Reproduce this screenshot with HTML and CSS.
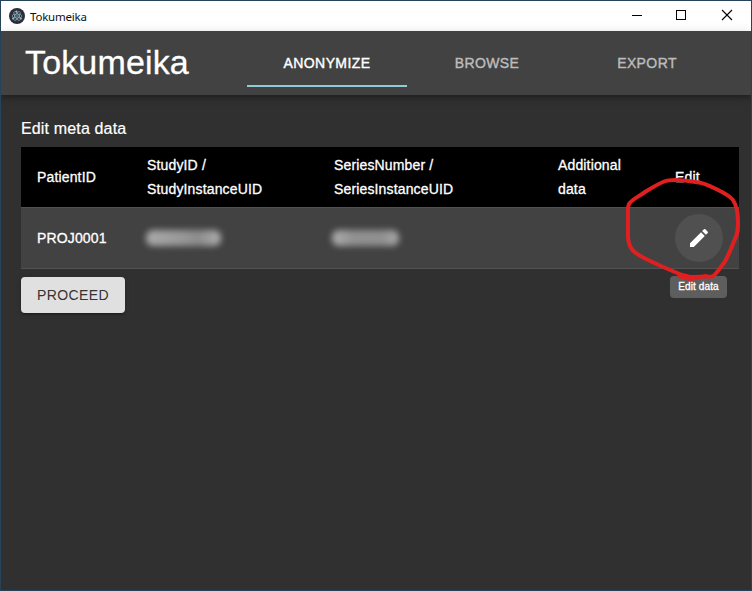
FILE: index.html
```html
<!DOCTYPE html>
<html lang="en">
<head>
<meta charset="utf-8">
<title>Tokumeika</title>
<link rel="stylesheet" href="styles.css">
</head>
<body>
<div class="window">
  <header class="titlebar">
    <svg class="logo" viewBox="0 0 16 16"><circle cx="8" cy="8" r="8" fill="#2b2e3a"/><g fill="none" stroke="#8fb0ba" stroke-width=".7"><ellipse cx="8" cy="8" rx="5" ry="2"/><ellipse cx="8" cy="8" rx="5" ry="2" transform="rotate(60 8 8)"/><ellipse cx="8" cy="8" rx="5" ry="2" transform="rotate(120 8 8)"/></g><g fill="#9fc4cf"><circle cx="8" cy="8" r=".7"/><circle cx="4" cy="10.500" r=".9"/><circle cx="12" cy="10.500" r=".9"/><circle cx="7.500" cy="3.300" r=".9"/></g></svg>
    <span class="caption">Tokumeika</span>
    <div class="controls">
      <svg viewBox="0 0 46 30"><path d="M17 14.5h10"/></svg>
      <svg viewBox="0 0 46 30"><path d="M16.500 9.500h9v9h-9z"/></svg>
      <svg viewBox="0 0 46 30"><path class="cross" d="M17 9l10 10M27 9l-10 10"/></svg>
    </div>
  </header>
  <nav class="appbar">
    <h1 class="brand">Tokumeika</h1>
    <div class="tabs">
      <a class="tab active">ANONYMIZE</a>
      <a class="tab">BROWSE</a>
      <a class="tab">EXPORT</a>
    </div>
  </nav>
  <main class="content">
    <h2 class="heading">Edit meta data</h2>
    <div class="table">
      <div class="row head">
        <div class="cell">PatientID</div>
        <div class="cell">StudyID /<br>StudyInstanceUID</div>
        <div class="cell">SeriesNumber /<br>SeriesInstanceUID</div>
        <div class="cell">Additional<br>data</div>
        <div class="cell">Edit</div>
      </div>
      <div class="row">
        <div class="cell">PROJ0001</div>
        <div class="cell"><span class="redacted study"></span></div>
        <div class="cell"><span class="redacted series"></span></div>
        <div class="cell"></div>
        <div class="cell">
          <button class="edit" aria-label="Edit data"><svg viewBox="0 0 24 24"><path d="M3 17.250V21h3.750L17.810 9.940l-3.750-3.750L3 17.250zM20.710 7.040a1 1 0 0 0 0-1.410l-2.340-2.340a1 1 0 0 0-1.410 0l-1.830 1.830 3.750 3.750 1.830-1.830z"/></svg></button>
          <span class="tooltip">Edit data</span>
        </div>
      </div>
    </div>
    <button class="proceed">PROCEED</button>
  </main>
  <svg class="annotation" viewBox="620 170 132 120"><path d="M675 180C671 180 668 180 664 181.500C656 185 650 189 645 192C638 197 631 200 629 204C627.500 207 628 210 628 214V236C628 243 630 248 634 251.500C638 255 642 257 646 259L662 266.500L682 275L690 277L712 276.500C716 275 719 269 724 263C729 255 732 246 735 239C738 233 738 229 738 222C738 212 737 206 733 200C729 195 722 192 715 188.500C708 185 703 183 699 182.500C690 181 682 180 675 180M679 276L690 279L706 276"/></svg>
</div>
</body>
</html>
```

FILE: styles.css
```css
* { box-sizing: border-box; }

body {
  margin: 0;
  font-family: "Liberation Sans", Arial, sans-serif;
  color: #fff;
}

.window {
  position: relative;
  height: 591px;
  display: flex;
  flex-direction: column;
  overflow: hidden;
  background: #303030;
  border: 1px solid #254459;
}

.titlebar {
  flex: none;
  height: 30px;
  display: flex;
  align-items: center;
  padding-left: 8px;
  background: #fff;
  color: #111;
}

.logo { width: 16px; height: 16px; }

.caption {
  margin-left: 5px;
  font: 11.5px "Noto Sans", sans-serif;
  letter-spacing: -.2px;
}

.controls { display: flex; margin-left: auto; }

.controls svg {
  width: 46px;
  height: 30px;
  fill: none;
  stroke: #000;
  shape-rendering: crispEdges;
}

.controls svg:first-child { margin-right: -1px; }
.controls svg:last-child { margin-left: -1px; }
.controls .cross { stroke-width: 1.1; shape-rendering: auto; }

.appbar {
  flex: none;
  height: 64px;
  display: flex;
  align-items: center;
  padding: 0 24px;
  background: #424242;
  box-shadow: 0 2px 4px -1px rgba(0,0,0,.2), 0 4px 5px rgba(0,0,0,.14), 0 1px 10px rgba(0,0,0,.12);
}

.brand {
  width: 222px;
  margin: 0;
  padding-bottom: 1px;
  font-size: 34px;
  font-weight: 400;
  line-height: 41px;
  letter-spacing: .15px;
  -webkit-text-stroke: .3px;
}

.tabs { display: flex; }

.tab {
  width: 160px;
  height: 48px;
  line-height: 48px;
  text-align: center;
  font-size: 14px;
  letter-spacing: .4px;
  color: #bcbcbc;
  -webkit-text-stroke: .4px;
}

.tab.active { color: #fff; border-bottom: 2px solid #90cad6; }

.content { padding: 22px 12px 0 20px; }

.heading {
  margin: 0 0 6px;
  font-size: 16px;
  font-weight: 400;
  line-height: 24px;
  letter-spacing: .15px;
  -webkit-text-stroke: .2px;
}

.table { font-size: 14px; letter-spacing: .15px; }

.row {
  display: grid;
  grid-template-columns: 110px 187px 224px 117px 80px;
  align-items: center;
  height: 61px;
  background: #424242;
  border-bottom: 1px solid #515151;
}

.head { background: #000; line-height: 24px; }

.cell { position: relative; padding-left: 16px; -webkit-text-stroke: .3px; }

.redacted {
  display: block;
  height: 16px;
  border-radius: 7px;
  filter: blur(3px);
}

.study {
  width: 75px;
  margin-left: -1px;
  background: linear-gradient(90deg, #aaa, #989898 50%, #8c8c8c 70%, #b0b0b0);
}

.series {
  width: 67px;
  margin-left: -2px;
  background: linear-gradient(90deg, #b0b0b0, #929292 30%, #909090 75%, #aaa);
}

.edit {
  display: block;
  width: 48px;
  height: 48px;
  padding: 12px;
  border: 0;
  border-radius: 50%;
  background: #505050;
}

.edit svg { display: block; width: 24px; height: 24px; fill: #fff; }

.tooltip {
  position: absolute;
  top: 62px;
  left: 11px;
  width: 57px;
  height: 22px;
  border-radius: 4px;
  background: #5e5e5e;
  text-align: center;
  font-size: 10px;
  line-height: 22px;
  letter-spacing: .1px;
  white-space: nowrap;
}

.proceed {
  display: block;
  width: 104px;
  height: 36px;
  margin-top: 8px;
  padding: 0;
  border: 0;
  border-radius: 4px;
  background: #e0e0e0;
  color: #333;
  font: 14px "Liberation Sans", Arial, sans-serif;
  letter-spacing: .4px;
  box-shadow: 0 3px 1px -2px rgba(0,0,0,.2), 0 2px 2px rgba(0,0,0,.14), 0 1px 5px rgba(0,0,0,.12);
}

.annotation {
  position: absolute;
  left: 619px;
  top: 169px;
  width: 132px;
  height: 120px;
  fill: none;
  stroke: #e02020;
  stroke-width: 4;
  stroke-linecap: round;
  stroke-linejoin: round;
  pointer-events: none;
}
```
